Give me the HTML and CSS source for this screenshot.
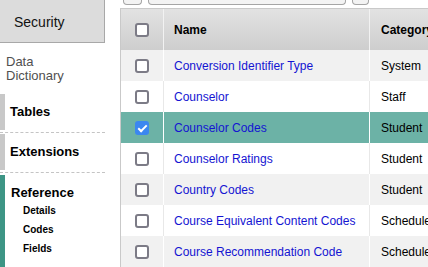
FILE: index.html
```html
<!DOCTYPE html>
<html>
<head>
    <meta charset="UTF-8" />
    <title>Data Dictionary</title>
    <link rel="stylesheet" href="styles.css">
</head>
<body>
<div class="page">
    <div class="sidebar">
        <div class="security">Security</div>
        <div class="dd-title">Data<br>Dictionary</div>
        <div class="nav-item"><div class="nav-label">Tables</div></div>
        <div class="nav-item"><div class="nav-label">Extensions</div></div>
        <div class="nav-item active">
            <div class="nav-label">Reference</div>
            <ul class="subnav">
                <li>Details</li>
                <li>Codes</li>
                <li>Fields</li>
            </ul>
        </div>
    </div>

    <div class="main">
        <div class="toolbar">
            <div class="tb-btn btn1"></div>
            <div class="tb-btn btn2"></div>
            <div class="tb-btn btn3"></div>
        </div>
        <table class="grid">
            <thead>
                <tr>
                    <th class="col-check"><span class="check"></span></th>
                    <th class="col-name">Name</th>
                    <th class="col-cat">Category</th>
                </tr>
            </thead>
            <tbody>
                <tr>
                    <td class="col-check"><span class="check"></span></td>
                    <td class="col-name"><a href="#">Conversion Identifier Type</a></td>
                    <td class="col-cat">System</td>
                </tr>
                <tr>
                    <td class="col-check"><span class="check"></span></td>
                    <td class="col-name"><a href="#">Counselor</a></td>
                    <td class="col-cat">Staff</td>
                </tr>
                <tr class="selected">
                    <td class="col-check"><span class="check checked"></span></td>
                    <td class="col-name"><a href="#">Counselor Codes</a></td>
                    <td class="col-cat">Student</td>
                </tr>
                <tr>
                    <td class="col-check"><span class="check"></span></td>
                    <td class="col-name"><a href="#">Counselor Ratings</a></td>
                    <td class="col-cat">Student</td>
                </tr>
                <tr>
                    <td class="col-check"><span class="check"></span></td>
                    <td class="col-name"><a href="#">Country Codes</a></td>
                    <td class="col-cat">Student</td>
                </tr>
                <tr>
                    <td class="col-check"><span class="check"></span></td>
                    <td class="col-name"><a href="#">Course Equivalent Content Codes</a></td>
                    <td class="col-cat">Schedule</td>
                </tr>
                <tr>
                    <td class="col-check"><span class="check"></span></td>
                    <td class="col-name"><a href="#">Course Recommendation Code</a></td>
                    <td class="col-cat">Schedule</td>
                </tr>
            </tbody>
        </table>
    </div>
</div>
</body>
</html>
```

FILE: styles.css
```css
body {
    margin: 0;
    overflow: hidden;
    font-family: "Liberation Sans", Arial, sans-serif;
    background-color: white;
}

.page {
    display: flex;
    width: 600px;
    height: 267px;
}

.sidebar {
    width: 120px;
    flex-shrink: 0;
}

.security {
    width: 90px;
    height: 42px;
    line-height: 44px;
    padding-left: 14px;
    font-size: 14px;
    color: #111;
    background-color: #dcdcdc;
    border-right: 1px solid #a8a8a8;
    border-bottom: 1px solid #a8a8a8;
}

.dd-title {
    margin: 12px 0 11px 0;
    padding-left: 6px;
    font-size: 13px;
    line-height: 14px;
    color: #505050;
}

.nav-item {
    width: 105px;
    border-bottom: 1px dashed #c4c4c4;
    padding-bottom: 2px;
    margin-bottom: 1px;
}

.nav-label {
    border-left: 5px solid #c8c8c8;
    padding-left: 5px;
    height: 36px;
    line-height: 36px;
    font-size: 13px;
    font-weight: bold;
    color: #000;
}

.nav-item.active {
    border-bottom: none;
    border-left: 5px solid #3d9585;
    margin-top: 2px;
    padding-top: 10px;
    height: 200px;
}

.nav-item.active .nav-label {
    border-left: none;
    padding-left: 6px;
    height: 16px;
    line-height: 16px;
}

.subnav {
    list-style: none;
    margin: 0;
    padding: 0 0 0 18px;
}

.subnav li {
    font-size: 10px;
    font-weight: bold;
    line-height: 19px;
    color: #000;
}

.main {
    flex: 1;
}

.toolbar {
    display: flex;
    gap: 6px;
    height: 8px;
    padding-left: 3px;
    align-items: flex-start;
}

.tb-btn {
    height: 5px;
    border: 1px solid #a5a5a5;
    border-top: none;
    border-radius: 0 0 4px 4px;
    background-color: #f3f3f3;
    box-sizing: border-box;
}

.btn1 {
    width: 19px;
}

.btn2 {
    width: 198px;
}

.btn3 {
    width: 17px;
}

.grid {
    border-collapse: separate;
    border-spacing: 0;
    table-layout: fixed;
    width: 449px;
    border-left: 1px solid #c9c9c9;
    border-top: 1px solid #c9c9c9;
    font-size: 12px;
}

.grid th,
.grid td {
    box-sizing: border-box;
    padding: 0;
    text-align: left;
    white-space: nowrap;
    overflow: hidden;
}

.grid th {
    height: 41px;
    font-weight: bold;
    color: #000;
    background: linear-gradient(#e2e2e2, #cecece);
}

.grid td {
    height: 31px;
    color: #000;
}

.col-check {
    width: 42px;
    text-align: center !important;
}

.col-name {
    width: 206px;
    padding-left: 10px !important;
}

.col-cat {
    width: 200px;
    padding-left: 11px !important;
}

.grid th.col-name,
.grid th.col-cat {
    border-left: 1px solid #f2f2f2;
}

.grid td.col-name,
.grid td.col-cat {
    border-left: 1px solid #e8e8e8;
}

.grid tbody tr:nth-child(odd) td {
    background-color: #f1f1f1;
}

.grid tbody tr:nth-child(odd) td.col-name,
.grid tbody tr:nth-child(odd) td.col-cat {
    border-left-color: #fff;
}

.grid tbody tr.selected td {
    background-color: #6cb2a6;
}

.grid a {
    color: #1414d2;
    text-decoration: none;
}

.check {
    display: inline-block;
    vertical-align: middle;
    width: 14px;
    height: 14px;
    box-sizing: border-box;
    border: 2px solid #7c7b86;
    border-radius: 3px;
    background-color: white;
    position: relative;
}

.check.checked {
    border-color: #3b87f0;
    background-color: #3b87f0;
}

.check.checked::after {
    content: "";
    position: absolute;
    left: 3px;
    top: 0px;
    width: 3px;
    height: 7px;
    border-right: 2px solid white;
    border-bottom: 2px solid white;
    transform: rotate(45deg);
}
```
